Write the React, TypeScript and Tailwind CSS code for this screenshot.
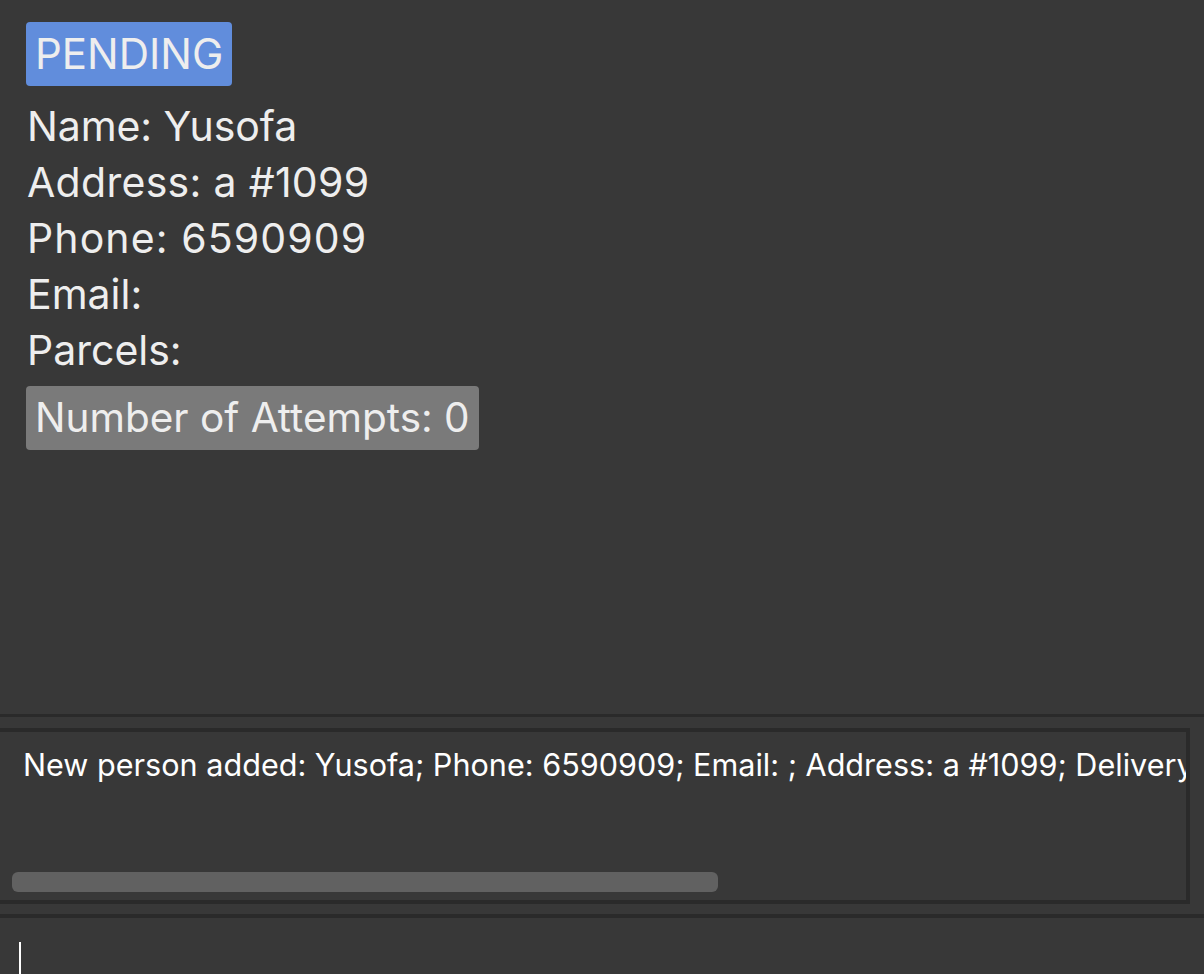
export default function App() {
  const log =
    "New person added: Yusofa; Phone: 6590909; Email: ; Address: a #1099; Delivery Status: PENDING; Parcels: ";

  return (
    <div
      className="w-[1204px] h-[974px] overflow-hidden bg-[#383838] flex flex-col text-[#eeeeee]"
      style={{ fontFamily: "Inter, 'Noto Sans', sans-serif" }}
    >
      {/* Person card */}
      <div className="h-[714px] shrink-0 pl-[26px] pt-[22px] flex flex-col items-start">
        <span className="bg-[#618ddc] rounded-[4px] px-[9px] h-[64px] flex items-center text-[42px] leading-none">
          PENDING
        </span>
        <div className="mt-[12px] flex flex-col text-[41px] leading-[56px] pl-[1px]">
          <span className="tracking-[-0.1px]">Name: Yusofa</span>
          <span className="tracking-[0.3px]">Address: a #1099</span>
          <span className="tracking-[1.1px]">Phone: 6590909</span>
          <span>Email:</span>
          <span>Parcels:</span>
        </div>
        <span className="mt-[8px] bg-[#7a7a7a] rounded-[4px] px-[9px] h-[64px] flex items-center text-[40.5px] leading-none">
          Number of Attempts: 0
        </span>
      </div>

      <div className="h-[3px] shrink-0 bg-[#2a2a2a]" />

      {/* Result display */}
      <div className="h-[197px] shrink-0 pt-[11px]">
        <div className="w-[1190px] h-[176px] border-y-4 border-r-4 border-[#2a2a2a] flex flex-col overflow-hidden">
          <div className="flex-1 overflow-hidden pl-[23px] pt-[15px]">
            <p className="whitespace-nowrap text-[30.6px] leading-[36px] text-white">{log}</p>
          </div>
          <div className="h-[32px] pl-[12px] pt-[4px]">
            <div className="w-[706px] h-[20px] rounded-[6px] bg-[#616161]" />
          </div>
        </div>
      </div>

      <div className="h-[4px] shrink-0 bg-[#2a2a2a]" />

      {/* Command box */}
      <div className="flex-1 pl-[19px] pt-[24px]">
        <div className="w-[2px] h-[40px] bg-white" />
      </div>
    </div>
  );
}
